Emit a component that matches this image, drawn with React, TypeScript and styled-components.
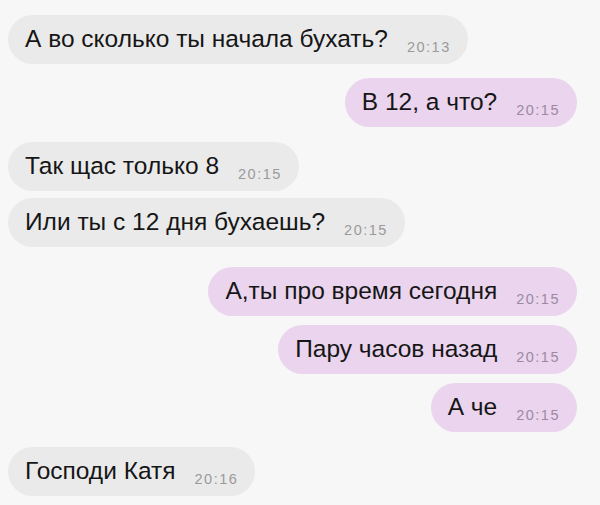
import React from 'react';
import styled, { createGlobalStyle } from 'styled-components';

type Side = 'in' | 'out';

// gap = space above the bubble
const MESSAGES: { side: Side; text: string; time: string; gap: number }[] = [
  { side: 'in', text: 'А во сколько ты начала бухать?', time: '20:13', gap: 0 },
  { side: 'out', text: 'В 12, а что?', time: '20:15', gap: 14 },
  { side: 'in', text: 'Так щас только 8', time: '20:15', gap: 15 },
  { side: 'in', text: 'Или ты с 12 дня бухаешь?', time: '20:15', gap: 7 },
  { side: 'out', text: 'А,ты про время сегодня', time: '20:15', gap: 20 },
  { side: 'out', text: 'Пару часов назад', time: '20:15', gap: 9 },
  { side: 'out', text: 'А че', time: '20:15', gap: 9 },
  { side: 'in', text: 'Господи Катя', time: '20:16', gap: 15 },
];

const GlobalStyle = createGlobalStyle`
  html, body {
    margin: 0;
    padding: 0;
    background: #f7f7f7;
  }
  body {
    font-family: "Liberation Sans", Arial, sans-serif;
  }
`;

const App = () => {
  return (
    <>
      <GlobalStyle />
      <Chat>
        {MESSAGES.map((msg, idx) => (
          <Row key={`msg-${idx}`} $side={msg.side} $gap={msg.gap}>
            <Bubble $side={msg.side}>
              <Text>{msg.text}</Text>
              <Time $side={msg.side}>{msg.time}</Time>
            </Bubble>
          </Row>
        ))}
      </Chat>
    </>
  );
};

export default App;

const Chat = styled.div`
  width: 600px;
  height: 505px;
  box-sizing: border-box;
  padding: 15px 23px 0 8px;
  display: flex;
  flex-direction: column;
  background: #f7f7f7;
  overflow: hidden;
`;

const Row = styled.div<{ $side: Side; $gap: number }>`
  display: flex;
  justify-content: ${(p) => (p.$side === 'out' ? 'flex-end' : 'flex-start')};
  margin-top: ${(p) => p.$gap}px;
`;

const Bubble = styled.div<{ $side: Side }>`
  height: 49px;
  box-sizing: border-box;
  padding: 0 17px;
  border-radius: 25px;
  display: flex;
  align-items: baseline;
  gap: 19px;
  background: ${(p) => (p.$side === 'out' ? '#ead4ee' : '#eaeaeb')};
  line-height: 47px;
`;

const Text = styled.span`
  font-size: 24.5px;
  color: #161616;
`;

const Time = styled.span<{ $side: Side }>`
  font-size: 14.5px;
  letter-spacing: 1.5px;
  position: relative;
  top: 5px;
  color: ${(p) => (p.$side === 'out' ? '#9c8aa2' : '#9a9a9a')};
`;
